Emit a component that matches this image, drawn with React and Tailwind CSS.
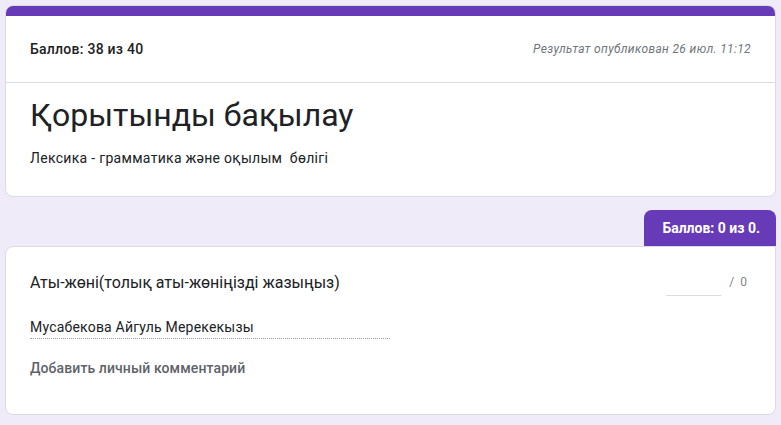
export default function App() {
  return (
    <div className="min-h-[425px] bg-[#f0ebf8] px-[5px] pt-[5px] pb-[10px] font-['Roboto',_'Noto_Sans',_sans-serif] text-[#202124]">
      {/* Header card */}
      <div className="overflow-hidden rounded-lg border border-[#dadce0] bg-white">
        <div className="h-[10px] bg-[#673ab7]" />
        <div className="flex h-[67px] items-center justify-between border-b border-[#dadce0] px-[24px]">
          <span className="text-[14px] font-medium tracking-[0.25px]">Баллов: 38 из 40</span>
          <span className="text-[12px] italic tracking-[0.35px] text-[#70757a]">Результат опубликован 26 июл. 11:12</span>
        </div>
        <div className="px-[24px] pt-[12px] pb-[28px]">
          <h1 className="text-[32px] leading-[40px]">Қорытынды бақылау</h1>
          <p className="mt-[13px] text-[14px] leading-[20px] tracking-[0.3px]">Лексика - грамматика және оқылым&nbsp; бөлігі</p>
        </div>
      </div>

      {/* Question */}
      <div className="mt-[13px] flex justify-end">
        <div className="flex h-[36px] items-center rounded-t-lg bg-[#673ab7] pr-[16px] pl-[18px] text-[14px] font-bold text-white">
          Баллов: 0 из 0.
        </div>
      </div>
      <div className="rounded-b-lg rounded-tl-lg border border-[#dadce0] bg-white px-[24px] pt-[24px] pb-[36px]">
        <div className="flex items-start justify-between">
          <span className="text-[16px] leading-[24px]">Аты-жөні(толық аты-жөніңізді жазыңыз)</span>
          <div className="mr-[4px] flex items-start gap-[8px] pt-[2px] text-[12px] text-[#80868b]">
            <div className="h-[23px] w-[55px] border-b border-[#dadce0]" />
            <span>/&nbsp;&nbsp;0</span>
          </div>
        </div>
        <div className="mt-[21px] w-[360px] border-b border-dotted border-[#9aa0a6] pb-[1px] text-[14px] leading-[20px] tracking-[0.2px]">
          Мусабекова Айгуль Мерекекызы
        </div>
        <div className="mt-[19px] text-[14px] font-medium leading-[20px] tracking-[0.1px] text-[#5f6368]">
          Добавить личный комментарий
        </div>
      </div>
    </div>
  );
}
